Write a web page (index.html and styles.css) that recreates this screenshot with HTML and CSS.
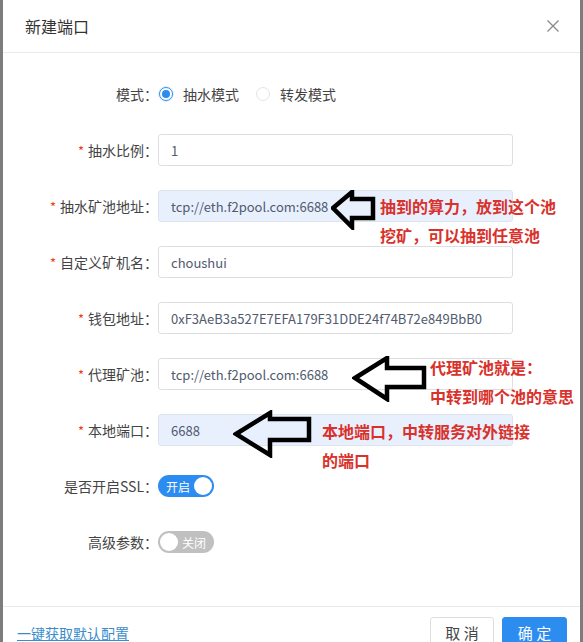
FILE: index.html
```html
<!DOCTYPE html>
<html lang="zh-CN">
<head>
<meta charset="utf-8">
<title>新建端口</title>
<link rel="stylesheet" href="styles.css">
</head>
<body>
<div class="dialog">
  <div class="header">
    <span class="title">新建端口</span>
    <svg class="close" width="14" height="14" viewBox="0 0 14 14"><path d="M1.5 1.5 L12.5 12.5 M12.5 1.5 L1.5 12.5" stroke="#8a8a8a" stroke-width="1.3" fill="none"/></svg>
  </div>

  <div class="form">
    <div class="row">
      <label class="label">模式：</label>
      <div class="radios">
        <span class="radio checked"></span><span class="radio-text">抽水模式</span>
        <span class="radio"></span><span class="radio-text">转发模式</span>
      </div>
    </div>
    <div class="row">
      <label class="label"><span class="req">*</span>抽水比例：</label>
      <div class="input">1</div>
    </div>
    <div class="row">
      <label class="label"><span class="req">*</span>抽水矿池地址：</label>
      <div class="input filled">tcp://eth.f2pool.com:6688</div>
    </div>
    <div class="row">
      <label class="label"><span class="req">*</span>自定义矿机名：</label>
      <div class="input">choushui</div>
    </div>
    <div class="row">
      <label class="label"><span class="req">*</span>钱包地址：</label>
      <div class="input">0xF3AeB3a527E7EFA179F31DDE24f74B72e849BbB0</div>
    </div>
    <div class="row">
      <label class="label"><span class="req">*</span>代理矿池：</label>
      <div class="input">tcp://eth.f2pool.com:6688</div>
    </div>
    <div class="row">
      <label class="label"><span class="req">*</span>本地端口：</label>
      <div class="input filled">6688</div>
    </div>
    <div class="row">
      <label class="label">是否开启SSL：</label>
      <div class="switch on"><span class="sw-text">开启</span><span class="knob"></span></div>
    </div>
    <div class="row">
      <label class="label">高级参数：</label>
      <div class="switch off"><span class="knob"></span><span class="sw-text">关闭</span></div>
    </div>
  </div>

  <div class="footer">
    <a class="link">一键获取默认配置</a>
    <div class="buttons">
      <button class="btn">取 消</button>
      <button class="btn primary">确 定</button>
    </div>
  </div>

  <svg class="arrow arrow1" width="46" height="40" viewBox="0 0 46 40"><polygon points="2,18 21,2 21,9 42,9 42,28 21,28 21,37" fill="none" stroke="#000" stroke-width="4.5" stroke-linejoin="miter"/></svg>
  <div class="note note1"><div>抽到的算力，放到这个池</div><div>挖矿，可以抽到任意池</div></div>

  <svg class="arrow arrow2" width="76" height="46" viewBox="0 0 76 46"><polygon points="3,22 35,2 35,12 72,12 72,31 35,31 35,43" fill="none" stroke="#000" stroke-width="4.5" stroke-linejoin="miter"/></svg>
  <div class="note note2"><div>代理矿池就是：</div><div>中转到哪个池的意思</div></div>

  <svg class="arrow arrow3" width="80" height="48" viewBox="0 0 80 48"><polygon points="3,24 37,3 37,9 76,9 76,30 37,30 37,45" fill="none" stroke="#000" stroke-width="4.5" stroke-linejoin="miter"/></svg>
  <div class="note note3"><div>本地端口，中转服务对外链接</div><div>的端口</div></div>
</div>
</body>
</html>
```

FILE: styles.css
```css
html, body {
  margin: 0;
  padding: 0;
  background: #7d7d7d;
  height: 100%;
  overflow: hidden;
}
body {
  font-family: "Noto Sans CJK SC", "Noto Sans", sans-serif;
  font-size: 14px;
  color: #515a6e;
}
.dialog {
  position: relative;
  margin: 0 3px;
  height: 642px;
  background: #fff;
  overflow: hidden;
}
.header {
  height: 52px;
  border-bottom: 1px solid #e8eaec;
  display: flex;
  align-items: center;
  justify-content: space-between;
  padding: 0 20px 0 22px;
}
.title {
  font-size: 16px;
  color: #333;
}
.close {
  display: block;
}
.form {
  padding: 25px 0 48px;
  display: flex;
  flex-direction: column;
  gap: 24px;
}
.row {
  height: 32px;
  display: flex;
  align-items: center;
}
.label {
  width: 155px;
  flex: none;
  text-align: right;
  color: #444;
  white-space: nowrap;
}
.req {
  color: #ed4014;
  margin-right: 4px;
  font-size: 13px;
}
.radios {
  display: flex;
  align-items: center;
  padding-left: 1px;
}
.radio {
  width: 14px;
  height: 14px;
  border: 1px solid #e3e5e8;
  border-radius: 50%;
  box-sizing: border-box;
  display: flex;
  align-items: center;
  justify-content: center;
}
.radio.checked {
  border-color: #2d8cf0;
  box-shadow: 0 0 0 1px rgba(45,140,240,0.15);
}
.radio.checked::after {
  content: "";
  width: 8px;
  height: 8px;
  border-radius: 50%;
  background: #2d8cf0;
}
.radio-text {
  margin-left: 10px;
  margin-right: 17px;
  color: #444;
}
.input {
  width: 355px;
  height: 32px;
  box-sizing: border-box;
  border: 1px solid #dcdee2;
  border-radius: 3px;
  padding: 0 12px;
  display: flex;
  align-items: center;
  color: #515a6e;
  font-size: 13px;
  white-space: nowrap;
}
.input.filled {
  background: #e8f0fe;
  border-color: #dfe4ec;
}
.switch {
  width: 56px;
  height: 22px;
  border-radius: 11px;
  box-sizing: border-box;
  display: flex;
  align-items: center;
  padding: 0 2px;
  font-size: 12px;
  color: #fff;
}
.switch.on {
  background: #2d8cf0;
  justify-content: space-between;
  padding-left: 8px;
}
.switch.off {
  background: #c0c0c0;
  justify-content: space-between;
  padding-right: 8px;
}
.knob {
  width: 18px;
  height: 18px;
  border-radius: 50%;
  background: #fff;
}
.footer {
  border-top: 1px solid #e8eaec;
  padding: 10px 13px 0 14px;
  display: flex;
  justify-content: space-between;
  align-items: center;
}
.link {
  color: #3a8dcc;
  text-decoration: underline;
  font-size: 14px;
  margin-top: -3px;
}
.buttons {
  display: flex;
  gap: 8px;
}
.btn {
  height: 34px;
  width: 64px;
  border: 1px solid #dcdee2;
  border-radius: 3px;
  background: #fff;
  color: #444;
  font-family: "Noto Sans CJK SC", sans-serif;
  font-size: 15px;
  padding: 0 0 3px;
}
.btn.primary {
  width: 65px;
  background: #2d8cf0;
  border-color: #2d8cf0;
  color: #fff;
}
.arrow {
  position: absolute;
}
.arrow1 { left: 328px; top: 190px; }
.arrow2 { left: 349px; top: 356px; }
.arrow3 { left: 230px; top: 410px; }
.note {
  position: absolute;
  color: #d9312b;
  font-weight: 700;
  font-size: 16px;
  line-height: 29px;
  white-space: nowrap;
}
.note1 { left: 377px; top: 192px; }
.note2 { left: 427px; top: 353px; }
.note3 { left: 319px; top: 417px; }
```
